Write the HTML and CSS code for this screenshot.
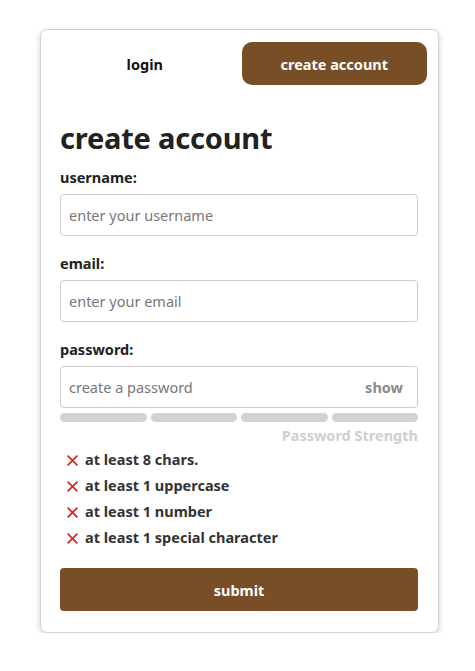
FILE: index.html
```html
<!DOCTYPE html>
<html lang="en">
<head>
<meta charset="utf-8">
<title>create account</title>
<link rel="stylesheet" href="styles.css">
</head>
<body>
<div class="card">
  <div class="tabs">
    <button class="tab">login</button>
    <button class="tab active">create account</button>
  </div>
  <form class="form">
    <h1 class="title">create account</h1>
    <div class="field">
      <label class="label">username:</label>
      <div class="input"><span class="ph">enter your username</span></div>
    </div>
    <div class="field">
      <label class="label">email:</label>
      <div class="input"><span class="ph">enter your email</span></div>
    </div>
    <div class="field last">
      <label class="label">password:</label>
      <div class="input"><span class="ph">create a password</span><span class="show">show</span></div>
    </div>
    <div class="bars"><span></span><span></span><span></span><span></span></div>
    <div class="strength">Password Strength</div>
    <ul class="rules">
      <li><svg class="x" viewBox="0 0 12 12"><path d="M1.5 1.5 L10.5 10.5 M10.5 1.5 L1.5 10.5"/></svg>at least 8 chars.</li>
      <li><svg class="x" viewBox="0 0 12 12"><path d="M1.5 1.5 L10.5 10.5 M10.5 1.5 L1.5 10.5"/></svg>at least 1 uppercase</li>
      <li><svg class="x" viewBox="0 0 12 12"><path d="M1.5 1.5 L10.5 10.5 M10.5 1.5 L1.5 10.5"/></svg>at least 1 number</li>
      <li><svg class="x" viewBox="0 0 12 12"><path d="M1.5 1.5 L10.5 10.5 M10.5 1.5 L1.5 10.5"/></svg>at least 1 special character</li>
    </ul>
    <button class="submit" type="button">submit</button>
  </form>
</div>
</body>
</html>
```
FILE: styles.css
```css
* { box-sizing: border-box; }
body {
  margin: 0;
  background: #fff;
  font-family: "Noto Sans", "Open Sans", sans-serif;
  color: #222;
}
.card {
  width: 399px;
  margin: 29px 0 0 40px;
  border: 1px solid #d4d4d4;
  border-radius: 7px;
  box-shadow: 0 2px 6px rgba(0,0,0,0.18);
  padding: 12px 11px 21px;
  background: #fff;
}
.tabs {
  display: grid;
  grid-template-columns: 1fr 1fr;
  gap: 4px;
}
.tab {
  height: 43px;
  border: none;
  background: transparent;
  font-family: inherit;
  font-size: 14.5px;
  font-weight: 700;
  color: #111;
  border-radius: 10px;
  cursor: pointer;
}
.tab.active {
  background: #784e26;
  color: #fff;
}
.form {
  padding: 0 9px 0 8px;
}
.title {
  margin: 34px 0 10px;
  font-size: 29px;
  line-height: 38px;
  font-weight: 700;
  color: #222;
  letter-spacing: -0.2px;
}
.field {
  margin-bottom: 17px;
}
.field.last { margin-bottom: 0; }
.label {
  display: block;
  font-size: 14.5px;
  font-weight: 700;
  line-height: 20px;
  margin-bottom: 7px;
  color: #222;
}
.input {
  height: 42px;
  border: 1px solid #cdcdcd;
  border-radius: 4px;
  display: flex;
  align-items: center;
  justify-content: space-between;
  padding: 0 14px 0 8px;
  font-size: 14.5px;
}
.ph { color: #777; }
.show { color: #8a8a8a; font-weight: 700; }
.bars {
  display: grid;
  grid-template-columns: repeat(4, 1fr);
  gap: 4px;
  margin-top: 5px;
}
.bars span {
  height: 9px;
  border-radius: 5px;
  background: #d2d2d2;
}
.strength {
  text-align: right;
  font-size: 14.5px;
  font-weight: 700;
  line-height: 20px;
  color: #cfcfcf;
  margin-top: 3px;
}
.rules {
  list-style: none;
  margin: 4px 0 0;
  padding: 0 0 0 6px;
  display: flex;
  flex-direction: column;
  gap: 6px;
}
.rules li {
  display: flex;
  align-items: center;
  font-size: 14.5px;
  font-weight: 700;
  line-height: 20px;
  color: #333;
}
.x {
  width: 13px;
  height: 13px;
  margin-right: 6px;
  margin-top: 2px;
  stroke: #e8241f;
  stroke-width: 1.7;
  fill: none;
}
.submit {
  display: block;
  width: 100%;
  height: 43px;
  margin-top: 21px;
  border: none;
  border-radius: 4px;
  background: #784e26;
  color: #fff;
  font-family: inherit;
  font-size: 14.5px;
  font-weight: 700;
}
```
